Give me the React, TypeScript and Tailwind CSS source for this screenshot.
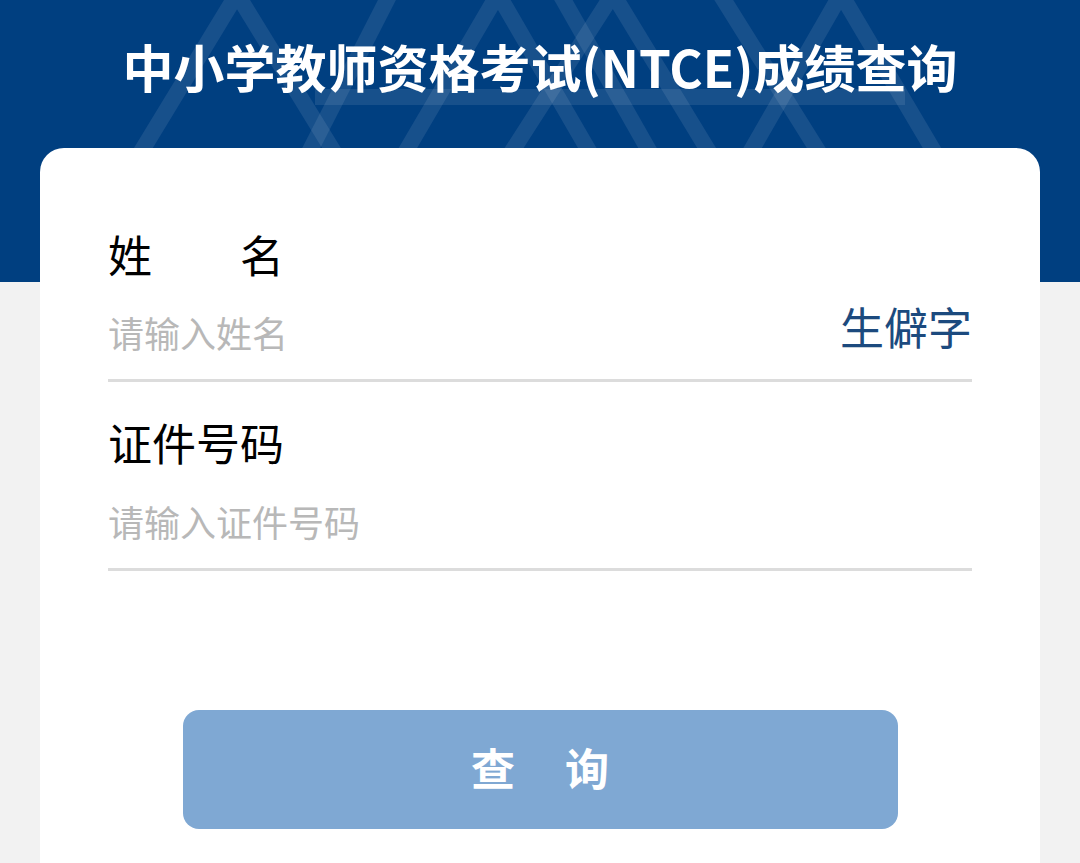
export default function App() {
    return (
        <div
            className="min-h-screen w-[1080px] bg-[#f2f2f2] overflow-hidden"
            style={{ fontFamily: '"Noto Sans CJK SC", "Noto Sans", sans-serif' }}
        >
            {/* header */}
            <header className="relative h-[282px] bg-[#003f80] overflow-hidden">
                <svg
                    className="absolute inset-0"
                    width="1080"
                    height="282"
                    viewBox="0 0 1080 282"
                    fill="none"
                    stroke="#ffffff"
                    strokeOpacity="0.09"
                    strokeWidth="16"
                >
                    <path d="M130 170 L237 -6 L345 170" />
                    <path d="M300 170 L390 -6" />
                    <path d="M395 170 L498 -6 L600 170" />
                    <path d="M560 -6 L660 170" />
                    <path d="M500 170 L613 -6 L720 170" />
                    <path d="M720 -6 L830 170" />
                    <path d="M740 170 L841 -6 L945 170" />
                    <path d="M315 97 L905 97" />
                </svg>
                <h1 className="relative pt-[41px] text-center text-[51px] leading-[51px] font-bold text-white">
                    中小学教师资格考试(NTCE)成绩查询
                </h1>
            </header>

            {/* form card */}
            <div className="relative mx-[40px] -mt-[134px] rounded-t-[24px] bg-white px-[68px] pt-[84px] pb-[34px]">
                <div>
                    <div className="flex w-[176px] justify-between text-[44px] leading-[44px] text-black">
                        <span>姓</span>
                        <span>名</span>
                    </div>
                    <div className="flex h-[106px] items-center justify-between border-b-[3px] border-[#dcdcdc]">
                        <span className="mt-[8px] text-[36px] leading-[36px] text-[#b8b8b8]">请输入姓名</span>
                        <span className="mb-[4px] text-[44px] leading-[44px] text-[#1c4a7e]">生僻字</span>
                    </div>
                </div>

                <div className="mt-[38px]">
                    <div className="text-[44px] leading-[44px] text-black">证件号码</div>
                    <div className="flex h-[107px] items-center border-b-[3px] border-[#dcdcdc]">
                        <span className="mt-[9px] text-[36px] leading-[36px] text-[#b8b8b8]">请输入证件号码</span>
                    </div>
                </div>

                <button className="mx-auto mt-[139px] flex h-[119px] w-[715px] items-center justify-center gap-[50px] rounded-[16px] bg-[#7fa8d3] pb-[6px] text-[44px] leading-[44px] font-bold text-white">
                    <span>查</span>
                    <span>询</span>
                </button>
            </div>
        </div>
    );
}
